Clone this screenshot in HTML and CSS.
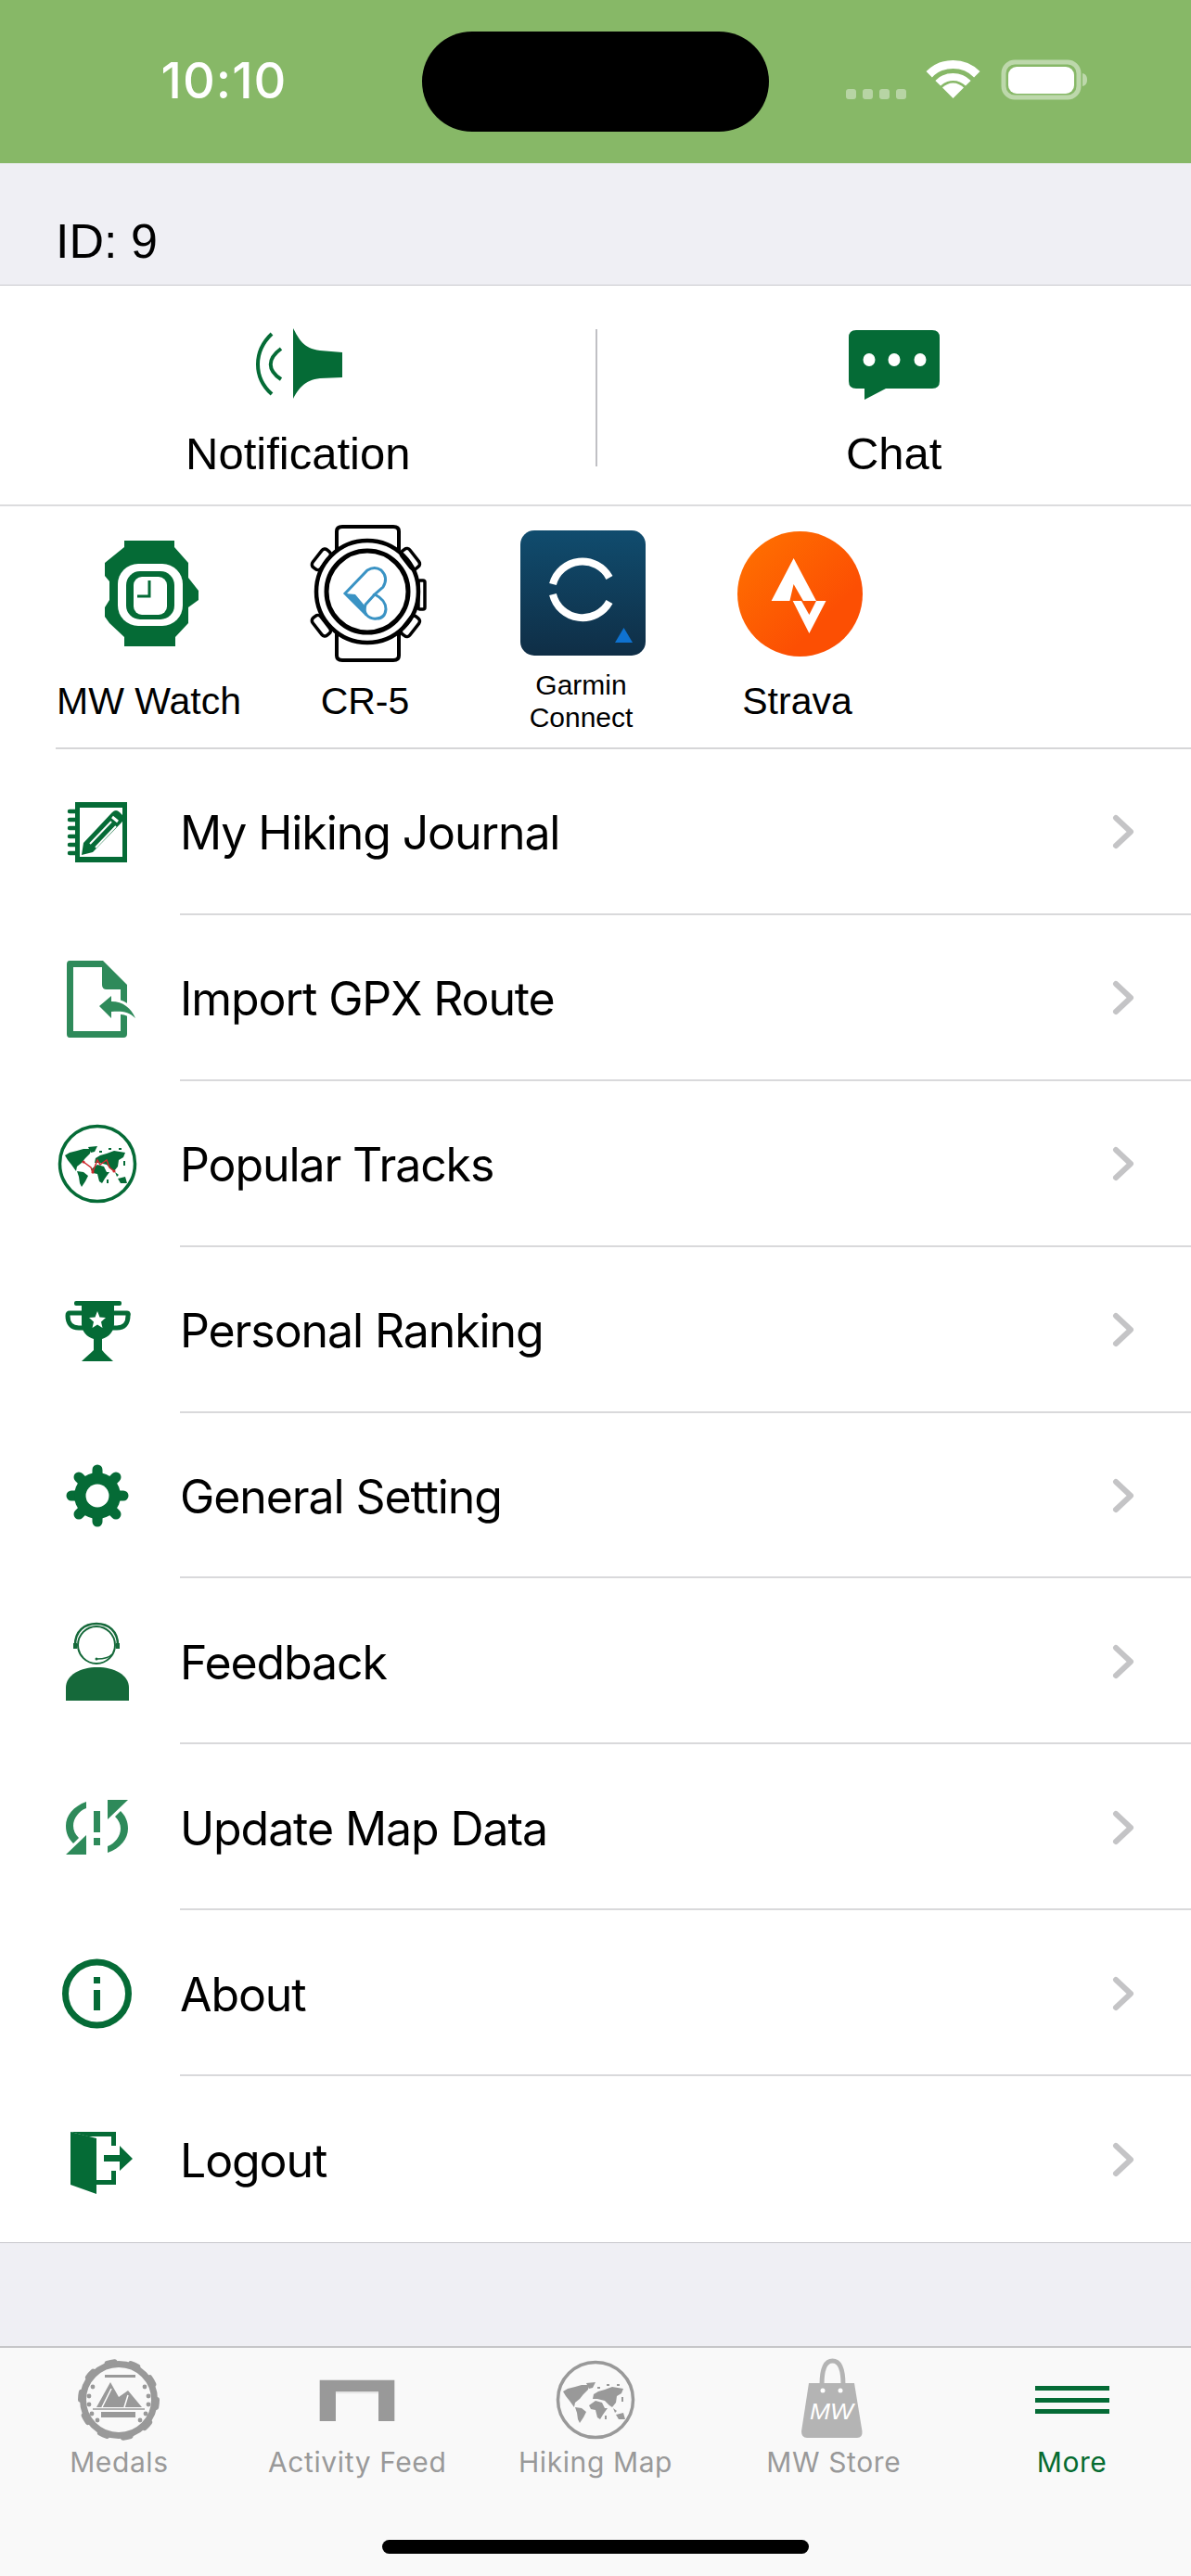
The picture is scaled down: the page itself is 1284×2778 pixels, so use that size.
FILE: index.html
```html
<!DOCTYPE html>
<html lang="en">
<head>
    <meta charset="UTF-8">
    <meta name="viewport" content="width=device-width, initial-scale=1.0">
    <title>More</title>
    <link rel="stylesheet" href="styles.css">
</head>
<body>
    <svg class="defs">
        <symbol id="world" viewBox="0 0 100 100">
            <path d="M15 41 L20 38 L28 36 L35 34 L43 34 L42 39 L37 44 L33 49 L28 53 L27 58 L22 51 L18 46 Z"/>
            <path d="M40 32 L50 31 L47 37 L43 38 Z"/>
            <path d="M28 58 L35 59 L40 63 L37 69 L33 75 L31 71 L30 64 Z"/>
            <path d="M43 56 L50 51 L57 53 L60 59 L63 59 L58 66 L55 71 L52 69 L50 61 L45 60 Z"/>
            <path d="M47 49 L48 44 L53 41 L60 39 L68 36 L80 38 L78 43 L73 46 L72 53 L68 58 L65 56 L60 51 L52 49 Z"/>
            <path d="M72 66 L80 64 L82 71 L75 71 Z"/>
            <path d="M69 59 L73 62 L71 64 Z"/>
            <path d="M52 36 h3 v2 h-3 Z M62 33 h3 v2 h-3 Z M73 33 h3 v2 h-3 Z M78 47 h2 v5 h-2 Z M60 67 h2 v4 h-2 Z"/>
        </symbol>
    </svg>

    <div class="status-bar">
        <div class="time">10:10</div>
        <div class="island"></div>
        <svg class="status-icons" viewBox="0 0 260 60" width="260" height="60">
            <g fill="#fff" opacity="0.4">
                <rect x="0" y="36" width="11" height="11" rx="3"/>
                <rect x="18" y="36" width="11" height="11" rx="3"/>
                <rect x="36" y="36" width="11" height="11" rx="3"/>
                <rect x="54" y="36" width="11" height="11" rx="3"/>
            </g>
            <g fill="none" stroke="#fff">
                <path d="M89.7 20.2 A36.5 36.5 0 0 1 141.3 20.2" stroke-width="9"/>
                <path d="M99.2 29.7 A23 23 0 0 1 131.8 29.7" stroke-width="8"/>
            </g>
            <path d="M115.5 46 L104 34.5 A16 16 0 0 1 127 34.5 Z" fill="#fff"/>
            <rect x="170" y="7" width="81" height="38" rx="12" fill="none" stroke="#fff" stroke-width="5" opacity="0.45"/>
            <rect x="175" y="12" width="71" height="29" rx="9" fill="#fff"/>
            <path d="M255 19 C259 20 260 23 260 26 C260 29 259 32 255 33 Z" fill="#fff" opacity="0.45"/>
        </svg>
    </div>

    <div class="id-bar">ID: 9</div>

    <div class="actions">
        <div class="action">
            <svg class="action-icon" viewBox="0 0 100 100">
                <path d="M45 9 C51 20 56 31 74 33 L98 35 V62 L74 63 C57 65 51 74 45 85 Z" fill="#056b36"/>
                <path d="M22 15 C2 34 2 62 22 80" fill="none" stroke="#056b36" stroke-width="4"/>
                <path d="M32 31 C17 42 17 54 32 64" fill="none" stroke="#056b36" stroke-width="4"/>
            </svg>
            <div class="action-label">Notification</div>
        </div>
        <div class="divider"></div>
        <div class="action">
            <svg class="action-icon" viewBox="0 0 100 100">
                <path d="M9 11 H91 Q99 11 99 19 V66 Q99 74 91 74 H41 L18 86 V74 H9 Q1 74 1 66 V19 Q1 11 9 11 Z" fill="#056b36"/>
                <ellipse cx="23" cy="43" rx="6.5" ry="7" fill="#fff"/>
                <ellipse cx="50" cy="43" rx="6.5" ry="7" fill="#fff"/>
                <ellipse cx="78" cy="43" rx="6.5" ry="7" fill="#fff"/>
            </svg>
            <div class="action-label">Chat</div>
        </div>
    </div>

    <div class="devices">
        <div class="device">
            <svg class="device-icon" viewBox="0 0 150 150">
                <path d="M48 18 H102 V25 L117 42 V58 L128 72 V82 L117 90 V107 L103 122 V132 H48 V122 L32 107 L27 100 V90 L32 82 V62 L27 56 V42 L48 25 Z" fill="#056b36"/>
                <rect x="41" y="43" width="70" height="67" rx="22" fill="#fff"/>
                <rect x="50" y="51" width="52" height="52" rx="15" fill="#056b36"/>
                <rect x="58" y="57" width="36" height="41" rx="9" fill="#fff"/>
                <path d="M75 61 V78 H62" fill="none" stroke="#056b36" stroke-width="3"/>
            </svg>
            <div class="device-label">MW Watch</div>
        </div>
        <div class="device">
            <svg class="device-icon" viewBox="0 0 150 150">
                <g fill="none" stroke="#000">
                    <path d="M44 28 V8 Q44 3 50 3 H105 Q111 3 111 8 V28" stroke-width="4"/>
                    <path d="M44 118 V142 Q44 147 50 147 H105 Q111 147 111 142 V118" stroke-width="4"/>
                    <circle cx="77" cy="73" r="55" stroke-width="4.5"/>
                    <circle cx="77" cy="73" r="44" stroke-width="5"/>
                    <rect x="132" y="61" width="7" height="31" rx="2" stroke-width="3.5"/>
                    <rect x="22" y="26" width="11" height="24" rx="4" transform="rotate(38 27 38)" stroke-width="3.5"/>
                    <rect x="118" y="26" width="11" height="24" rx="4" transform="rotate(-38 123 38)" stroke-width="3.5"/>
                    <rect x="22" y="98" width="11" height="24" rx="4" transform="rotate(-38 27 110)" stroke-width="3.5"/>
                    <rect x="118" y="98" width="11" height="24" rx="4" transform="rotate(38 123 110)" stroke-width="3.5"/>
                </g>
                <g fill="none" stroke="#3a93c4" stroke-width="3">
                    <path d="M53 75 L77 50 Q85 45 92 50 Q100 58 94 68 L85 76 Q97 82 97 92 Q96 102 87 102 Q81 103 76 98 Z"/>
                    <path d="M85 76 L75 87 Q73 94 76 98"/>
                </g>
                <path d="M53 75 L76 99 L74 88 L64 76 Z" fill="#3a93c4"/>
            </svg>
            <div class="device-label">CR-5</div>
        </div>
        <div class="device">
            <svg class="device-icon" viewBox="0 0 150 150">
                <defs>
                    <linearGradient id="garmin-bg" x1="0" y1="0" x2="0" y2="1">
                        <stop offset="0" stop-color="#104c6e"/>
                        <stop offset="1" stop-color="#0f2e46"/>
                    </linearGradient>
                </defs>
                <rect x="9" y="7" width="135" height="135" rx="15" fill="url(#garmin-bg)"/>
                <path d="M44 65 A33 33 0 0 1 105 58" fill="none" stroke="#fff" stroke-width="8"/>
                <path d="M44 76 A33 33 0 0 0 105 84" fill="none" stroke="#fff" stroke-width="8"/>
                <path d="M120.5 112 L130 128 H111 Z" fill="#0f72d0"/>
            </svg>
            <div class="device-label device-label-small">Garmin<br>Connect</div>
        </div>
        <div class="device">
            <svg class="device-icon" viewBox="0 0 150 150">
                <defs>
                    <linearGradient id="strava-bg" x1="0" y1="0" x2="1" y2="1">
                        <stop offset="0" stop-color="#ff7300"/>
                        <stop offset="0.7" stop-color="#fc4f03"/>
                    </linearGradient>
                </defs>
                <circle cx="77.5" cy="75.5" r="67.5" fill="url(#strava-bg)"/>
                <path d="M70.6 37 L46.6 83 H66.4 L70.6 65 L81 83 H95 Z" fill="#fff"/>
                <path d="M69.7 83 L87.4 118 L105.5 83 H95 L87.4 98 L79 83 Z" fill="#fff"/>
            </svg>
            <div class="device-label">Strava</div>
        </div>
    </div>

    <div class="menu">
        <div class="menu-row">
            <svg class="menu-icon" viewBox="0 0 100 100">
                <path d="M26 18 H82 V83 H26 Z M31 24 V77 H77 V24 Z" fill="#056b36" fill-rule="evenodd"/>
                <g stroke="#056b36" stroke-width="4.5" stroke-linecap="round">
                    <path d="M20 28 H26 M20 37 H26 M20 46 H26 M20 55 H26 M20 64 H26 M20 73 H26"/>
                </g>
                <path d="M33 75 L35 62 L66 29 Q70 25 74 29 L77 32 Q80 36 76 40 L45 72 Z" fill="#056b36"/>
                <path d="M42 63 L65 39 M48 67 L70 44" stroke="#fff" stroke-width="2"/>
                <path d="M66 34 L72 39" stroke="#fff" stroke-width="3"/>
            </svg>
            <div class="menu-label">My Hiking Journal</div>
            <svg class="chevron" viewBox="0 0 24 38"><path d="M4 4 L20 19 L4 34" /></svg>
        </div>
        <div class="menu-row">
            <svg class="menu-icon" viewBox="0 0 100 100">
                <path d="M20 10 H56 L82 36 V89 Q82 93 78 93 H20 Q17 93 17 89 V14 Q17 10 20 10 Z M24 17 V86 H75 V41 H60 Q55 41 55 36 V17 Z" fill="#2e8a5a" fill-rule="evenodd"/>
                <path d="M52 59 L65 48 V54 C78 54 86 61 91 72 C84 65 76 64 65 65 V72 Z" fill="#2e8a5a" stroke="#fff" stroke-width="6" paint-order="stroke"/>
            </svg>
            <div class="menu-label">Import GPX Route</div>
            <svg class="chevron" viewBox="0 0 24 38"><path d="M4 4 L20 19 L4 34" /></svg>
        </div>
        <div class="menu-row">
            <svg class="menu-icon" viewBox="0 0 100 100">
                <circle cx="50" cy="50" r="40.5" fill="none" stroke="#056b36" stroke-width="3.5"/>
                <use href="#world" width="100" height="100" fill="#056b36"/>
                <path d="M35 48 L43 54 L45 59 L50 46 L53 51 L60 46 L63 54 L68 58" fill="none" stroke="#cf2a2f" stroke-width="1.5"/>
                <circle cx="35" cy="48" r="1.6" fill="#cf2a2f"/>
                <circle cx="45" cy="59" r="1.6" fill="#cf2a2f"/>
                <circle cx="68" cy="58" r="1.6" fill="#cf2a2f"/>
            </svg>
            <div class="menu-label">Popular Tracks</div>
            <svg class="chevron" viewBox="0 0 24 38"><path d="M4 4 L20 19 L4 34" /></svg>
        </div>
        <div class="menu-row">
            <svg class="menu-icon" viewBox="0 0 100 100">
                <rect x="25" y="19" width="51" height="5" rx="2" fill="#056b36"/>
                <path d="M33 24 H68 V44 C68 52 62 58 55 60 V72 C58 76 63 80 67 84 H33 C37 80 42 76 46 72 V60 C39 58 33 52 33 44 Z" fill="#056b36"/>
                <path d="M33 32 H20 Q18 32 18 35 C18 43 22 48 30 48 H36 M68 32 H82 Q84 32 83 35 C83 43 79 48 71 48 H65" fill="none" stroke="#056b36" stroke-width="5"/>
                <path d="M50 30 L52.5 36.5 L59 37 L54 41.5 L55.5 48 L50 44.5 L44.5 48 L46 41.5 L41 37 L47.5 36.5 Z" fill="#fff"/>
            </svg>
            <div class="menu-label">Personal Ranking</div>
            <svg class="chevron" viewBox="0 0 24 38"><path d="M4 4 L20 19 L4 34" /></svg>
        </div>
        <div class="menu-row">
            <svg class="menu-icon" viewBox="0 0 100 100">
                <g stroke="#056b36" stroke-width="11" stroke-linecap="round">
                    <path d="M50 22 V78 M22 50 H78 M30 30 L70 70 M70 30 L30 70"/>
                </g>
                <circle cx="50" cy="50" r="25" fill="#056b36"/>
                <circle cx="50" cy="50" r="12.5" fill="#fff"/>
            </svg>
            <div class="menu-label">General Setting</div>
            <svg class="chevron" viewBox="0 0 24 38"><path d="M4 4 L20 19 L4 34" /></svg>
        </div>
        <div class="menu-row">
            <svg class="menu-icon" viewBox="0 0 100 100">
                <circle cx="49" cy="32" r="20" fill="none" stroke="#15693a" stroke-width="2"/>
                <path d="M26 32 C26 17 36 9 49 9 C62 9 72 17 72 32" fill="none" stroke="#15693a" stroke-width="2.5"/>
                <rect x="24" y="30" width="4" height="6" fill="#15693a"/>
                <rect x="70" y="30" width="4" height="6" fill="#15693a"/>
                <path d="M66 42 C62 46 56 47 50 47" fill="none" stroke="#15693a" stroke-width="1.5"/>
                <circle cx="49" cy="47" r="1.5" fill="#15693a"/>
                <path d="M16 92 V78 C16 64 32 56 50 56 C68 56 84 64 84 78 V92 Z" fill="#15693a"/>
            </svg>
            <div class="menu-label">Feedback</div>
            <svg class="chevron" viewBox="0 0 24 38"><path d="M4 4 L20 19 L4 34" /></svg>
        </div>
        <div class="menu-row">
            <svg class="menu-icon" viewBox="0 0 100 100">
                <g fill="#2e8a5a">
                    <path id="update-arc" d="M38 22 C24 27 16 37 16 48 C16 56 19 62 24 67 L30 61 C26 57 24 53 24 48 C24 40 30 32 38 29 Z M16 79 L38 58 V79 Z"/>
                    <use href="#update-arc" transform="rotate(180 49.5 49.5)"/>
                    <rect x="46" y="32" width="7" height="23"/>
                    <rect x="46" y="61" width="7" height="8"/>
                </g>
            </svg>
            <div class="menu-label">Update Map Data</div>
            <svg class="chevron" viewBox="0 0 24 38"><path d="M4 4 L20 19 L4 34" /></svg>
        </div>
        <div class="menu-row">
            <svg class="menu-icon" viewBox="0 0 100 100">
                <circle cx="49.5" cy="50" r="34" fill="none" stroke="#056b36" stroke-width="7"/>
                <rect x="46" y="32" width="7" height="7" fill="#056b36"/>
                <rect x="46" y="46" width="7" height="22" fill="#056b36"/>
            </svg>
            <div class="menu-label">About</div>
            <svg class="chevron" viewBox="0 0 24 38"><path d="M4 4 L20 19 L4 34" /></svg>
        </div>
        <div class="menu-row">
            <svg class="menu-icon" viewBox="0 0 100 100">
                <path d="M21 20 L49 27 V87 L21 77 Z" fill="#056b36"/>
                <path d="M21 20 H70 V35 H65 V25 H40 Z M49 72 H65 V62 H70 V77 H49 Z" fill="#056b36"/>
                <path d="M57 45 H74 V35 L88 49 L74 62 V52 H57 Z" fill="#056b36"/>
            </svg>
            <div class="menu-label">Logout</div>
            <svg class="chevron" viewBox="0 0 24 38"><path d="M4 4 L20 19 L4 34" /></svg>
        </div>
    </div>

    <div class="spacer"></div>

    <div class="tab-bar">
        <div class="tabs">
            <div class="tab">
                <svg class="tab-icon" viewBox="0 0 100 100">
                    <circle cx="50" cy="50" r="38.5" fill="none" stroke="#999" stroke-width="7"/>
                    <circle cx="50" cy="50" r="41" fill="none" stroke="#999" stroke-width="6" stroke-linecap="round" stroke-dasharray="8 17.76"/>
                    <rect x="35" y="23" width="33" height="3" fill="#999"/>
                    <path d="M26 58 L41 31 L50 47 L60 40 L75 58 Z" fill="#999"/>
                    <path d="M32 58 L42 38 M56 58 L60 45" stroke="#fff" stroke-width="1.5"/>
                    <path d="M22 60 H78" stroke="#999" stroke-width="1.5"/>
                    <rect x="31" y="63" width="37" height="6" fill="#999"/>
                    <g fill="#999">
                        <circle cx="22" cy="36" r="2.4"/><circle cx="18" cy="46" r="2.4"/><circle cx="18" cy="55" r="2.4"/><circle cx="21" cy="65" r="2.4"/><circle cx="27" cy="72" r="2.4"/>
                        <circle cx="78" cy="36" r="2.4"/><circle cx="82" cy="46" r="2.4"/><circle cx="82" cy="55" r="2.4"/><circle cx="79" cy="65" r="2.4"/><circle cx="73" cy="72" r="2.4"/>
                    </g>
                </svg>
                <div class="tab-label">Medals</div>
            </div>
            <div class="tab">
                <svg class="tab-icon" viewBox="0 0 100 100">
                    <path d="M8 30 H92 V76 H74 V43 H26 V76 H8 Z" fill="#999"/>
                    <rect x="26" y="43" width="48" height="2" fill="#e4e4e4"/>
                </svg>
                <div class="tab-label tab-label-low">Activity Feed</div>
            </div>
            <div class="tab">
                <svg class="tab-icon" viewBox="0 0 100 100">
                    <circle cx="50" cy="50" r="40.5" fill="none" stroke="#999" stroke-width="3.5"/>
                    <use href="#world" width="100" height="100" fill="#999"/>
                </svg>
                <div class="tab-label">Hiking Map</div>
            </div>
            <div class="tab">
                <svg class="tab-icon" viewBox="0 0 100 100">
                    <path d="M37 34 C37 14 42 8 48.5 8 C55 8 60 14 60 34" fill="none" stroke="#b4b4b4" stroke-width="5"/>
                    <path d="M23 32 H72 L80.5 84 Q81 91 75 91 H21 Q15 91 15 84 Z" fill="#b4b4b4"/>
                    <circle cx="38" cy="40" r="2.5" fill="#fff"/>
                    <circle cx="57" cy="40" r="2.5" fill="#fff"/>
                    <text class="bag-text" x="24" y="71" textLength="47" lengthAdjust="spacingAndGlyphs">MW</text>
                </svg>
                <div class="tab-label">MW Store</div>
            </div>
            <div class="tab tab-active">
                <svg class="tab-icon" viewBox="0 0 100 100">
                    <rect x="10" y="35" width="80" height="5" fill="#056b36"/>
                    <rect x="10" y="48" width="80" height="5" fill="#056b36"/>
                    <rect x="10" y="60" width="80" height="5" fill="#056b36"/>
                </svg>
                <div class="tab-label">More</div>
            </div>
        </div>
        <div class="home-indicator"></div>
    </div>
</body>
</html>
```

FILE: styles.css
```css
body {
    margin: 0;
    width: 1284px;
    height: 2778px;
    display: flex;
    flex-direction: column;
    overflow: hidden;
    background-color: #efeff4;
    font-family: Inter, "Liberation Sans", sans-serif;
    color: #000;
}
.defs {
    display: none;
}

/* status bar */
.status-bar {
    height: 176px;
    flex-shrink: 0;
    display: flex;
    background-color: #87b867;
}
.time {
    width: 455px;
    box-sizing: border-box;
    padding-left: 28px;
    margin-top: 57px;
    text-align: center;
    color: #fff;
    font-size: 54px;
    font-weight: 500;
    line-height: 60px;
    letter-spacing: 1px;
}
.island {
    width: 374px;
    height: 108px;
    margin-top: 34px;
    border-radius: 54px;
    background-color: #000;
}
.status-icons {
    margin: 60px 0 0 83px;
}

/* id */
.id-bar {
    height: 132px;
    flex-shrink: 0;
    box-sizing: border-box;
    padding: 49px 0 0 60px;
    border-bottom: 1px solid #c8c8cc;
    font-family: "Liberation Sans", Arial, sans-serif;
    font-size: 52px;
    line-height: 70px;
}

/* notification + chat */
.actions {
    height: 238px;
    flex-shrink: 0;
    box-sizing: border-box;
    display: flex;
    padding-left: 1px;
    background-color: #fff;
    border-bottom: 2px solid #dcdcde;
}
.action {
    flex: 1;
    display: flex;
    flex-direction: column;
    align-items: center;
    padding-top: 37px;
}
.action-icon {
    width: 100px;
    height: 100px;
}
.action-label {
    margin-top: 14px;
    font-family: "Liberation Sans", Arial, sans-serif;
    font-size: 49px;
    line-height: 60px;
}
.divider {
    width: 2px;
    height: 148px;
    margin-top: 47px;
    background-color: #c0c0c4;
}

/* watches row */
.devices {
    height: 262px;
    flex-shrink: 0;
    box-sizing: border-box;
    display: flex;
    padding: 19px 0 0 44px;
    background-color: #fff;
    background-image: linear-gradient(#d6d6d8, #d6d6d8);
    background-repeat: no-repeat;
    background-size: calc(100% - 60px) 2px;
    background-position: 60px 100%;
}
.device {
    width: 233px;
    display: flex;
    flex-direction: column;
    align-items: center;
}
.device-icon {
    width: 150px;
    height: 150px;
}
.device-label {
    height: 80px;
    margin-top: 1px;
    display: flex;
    align-items: center;
    text-align: center;
    font-family: "Liberation Sans", Arial, sans-serif;
    font-size: 41px;
    white-space: nowrap;
}
.device-label-small {
    font-size: 30px;
    line-height: 35px;
}

/* list */
.menu {
    flex-shrink: 0;
    background-color: #fff;
    border-bottom: 1px solid #c8c8cc;
}
.menu-row {
    height: 178.9px;
    box-sizing: border-box;
    display: flex;
    align-items: center;
    padding-left: 55px;
    position: relative;
}
.menu-row::after {
    content: "";
    position: absolute;
    left: 194px;
    right: 0;
    bottom: 0;
    height: 2px;
    background-color: #d9d9db;
}
.menu-row:last-child::after {
    display: none;
}
.menu-icon {
    width: 100px;
    height: 100px;
    flex-shrink: 0;
}
.menu-label {
    flex: 1;
    margin-left: 39px;
    padding-top: 2px;
    font-size: 50px;
    letter-spacing: -1.1px;
}
.chevron {
    width: 24px;
    height: 38px;
    margin-right: 61px;
    fill: none;
    stroke: #c4c4c6;
    stroke-width: 6;
    stroke-linecap: round;
    stroke-linejoin: round;
}
.spacer {
    flex: 1;
}

/* tab bar */
.tab-bar {
    height: 248px;
    flex-shrink: 0;
    box-sizing: border-box;
    padding-top: 6px;
    border-top: 2px solid #c6c6c8;
    background-color: #f9f9f9;
}
.tabs {
    display: flex;
    height: 134px;
}
.tab {
    flex: 1;
    display: flex;
    flex-direction: column;
    align-items: center;
    color: #999;
}
.tab-active {
    color: #056b30;
}
.tab-icon {
    width: 100px;
    height: 100px;
}
.tab-label {
    font-size: 30px;
    line-height: 34px;
    letter-spacing: 0.6px;
}
.tab-label-low {
    margin-top: 4px;
}
.bag-text {
    font-family: "Liberation Sans", Arial, sans-serif;
    font-size: 24px;
    font-style: italic;
    fill: #fff;
}
.home-indicator {
    width: 460px;
    height: 15px;
    margin: 67px auto 0;
    border-radius: 8px;
    background-color: #000;
}
```
